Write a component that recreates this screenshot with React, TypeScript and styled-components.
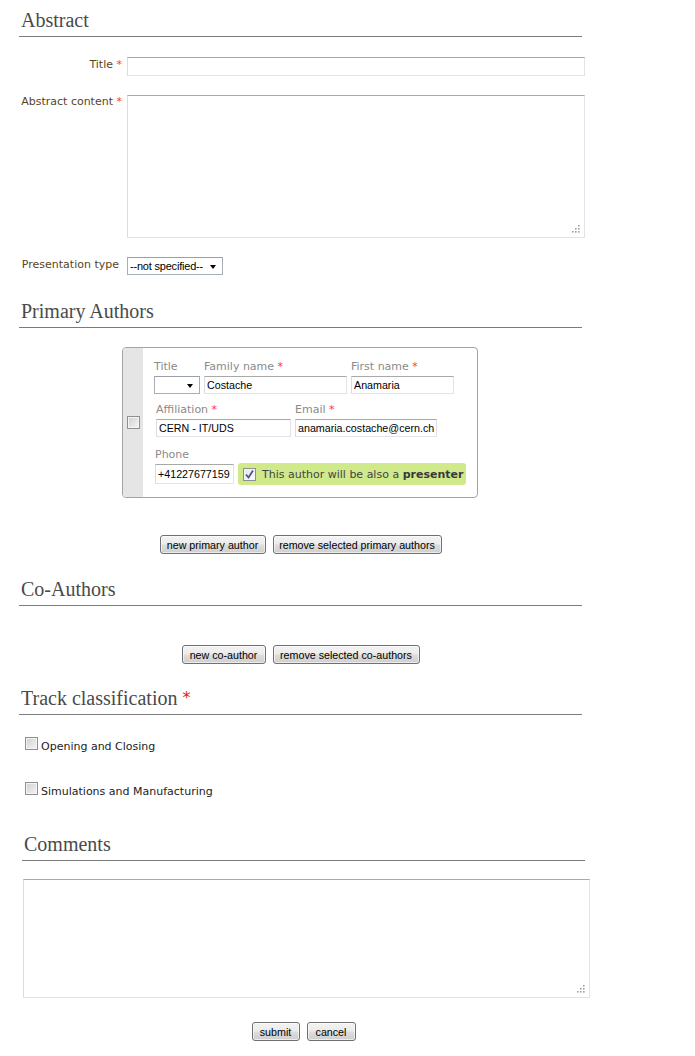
import React from "react";
import styled, { createGlobalStyle } from "styled-components";

const Global = createGlobalStyle`
  html, body { margin: 0; padding: 0; background: #ffffff; }
  body { font-family: "DejaVu Sans", Verdana, sans-serif; }
  * { box-sizing: border-box; }
`;

const Page = styled.div`
  padding: 8px 0 20px 19px;
  width: 600px;
`;

const Section = styled.section<{ $top?: number; $indent?: number }>`
  margin-top: ${(p) => p.$top ?? 0}px;
  margin-left: ${(p) => p.$indent ?? 0}px;
`;

const Heading = styled.h2`
  margin: 0;
  width: 563px;
  padding: 0 0 4px 2px;
  font-family: "Liberation Serif", "Times New Roman", serif;
  font-weight: normal;
  font-size: 20px;
  line-height: 24px;
  color: #4a4a4a;
  border-bottom: 1px solid #7b7b7b;
`;

const Star = styled.span`
  color: #ff3333;
`;

const HeadStar = styled.span`
  color: #e0201a;
  font-family: "DejaVu Sans", sans-serif;
  font-size: 16px;
  vertical-align: 2px;
`;

const FormGrid = styled.div`
  margin-top: 20px;
  display: grid;
  grid-template-columns: 104px 458px;
  column-gap: 4px;
  row-gap: 19px;
  align-items: start;
`;

const FieldLabel = styled.label<{ $pad?: number; $shift?: number }>`
  text-align: right;
  font-size: 11px;
  line-height: 13px;
  padding-top: ${(p) => p.$pad ?? 0}px;
  padding-right: ${(p) => 1 + (p.$shift ?? 0)}px;
  color: #5a4422;
  white-space: nowrap;
`;

const TextInput = styled.input<{ $w?: number; $h?: number }>`
  display: block;
  width: ${(p) => (p.$w ? `${p.$w}px` : "100%")};
  height: ${(p) => p.$h ?? 18}px;
  margin: 0;
  padding: 0 1px 0 2px;
  font-family: "Liberation Sans", Arial, sans-serif;
  font-size: 10.7px;
  color: #000;
  background: #fff;
  border: 1px solid #e2e3ea;
  border-top-color: #a9a9a9;
  border-left-color: #dadce3;
  outline: none;
`;

const AreaWrap = styled.div<{ $w?: number; $h: number; $mt?: number; $ml?: number }>`
  position: relative;
  width: ${(p) => (p.$w ? `${p.$w}px` : "100%")};
  height: ${(p) => p.$h}px;
  margin-top: ${(p) => p.$mt ?? 0}px;
  margin-left: ${(p) => p.$ml ?? 0}px;
`;

const Area = styled.textarea`
  display: block;
  width: 100%;
  height: 100%;
  margin: 0;
  resize: none;
  border: 1px solid #e2e3ea;
  border-top-color: #a9a9a9;
  border-left-color: #dadce3;
  outline: none;
  font-family: "Liberation Sans", Arial, sans-serif;
  font-size: 11px;
`;

const Grip = styled.svg`
  position: absolute;
  right: 5px;
  bottom: 5px;
  width: 8px;
  height: 8px;
  pointer-events: none;
`;

const SelectBox = styled.span<{ $w: number; $h?: number }>`
  display: flex;
  align-items: center;
  justify-content: space-between;
  width: ${(p) => p.$w}px;
  height: ${(p) => p.$h ?? 18}px;
  padding: 0 6px 0 2px;
  background: #fff;
  border: 1px solid #a8aeb6;
  border-top-color: #9aa0a8;
  font-family: "Liberation Sans", Arial, sans-serif;
  font-size: 11px;
  color: #000;
  letter-spacing: -0.2px;
`;

const Arrow = styled.span`
  width: 0;
  height: 0;
  margin-top: 2px;
  border-left: 3.5px solid transparent;
  border-right: 3.5px solid transparent;
  border-top: 4px solid #000;
`;

/* checkbox */
const Box = styled.span<{ $checked?: boolean }>`
  display: inline-flex;
  align-items: center;
  justify-content: center;
  flex: none;
  width: 13px;
  height: 13px;
  border: 1px solid #8e8f8f;
  box-shadow: inset 0 0 0 1px #f4f4f4;
  background: ${(p) =>
    p.$checked
      ? "linear-gradient(135deg, #e6e6e6 0%, #fbfbfb 100%)"
      : "linear-gradient(135deg, #cfcfcf 0%, #f6f6f6 100%)"};
`;

const Check = ({ checked }: { checked?: boolean }) => (
  <Box $checked={checked}>
    {checked && (
      <svg width="11" height="11" viewBox="0 0 11 11">
        <path d="M2 5.5 L4.5 8.5 L9 1.5" fill="none" stroke="#4a5890" strokeWidth="1.8" />
      </svg>
    )}
  </Box>
);

/* author card */
const Card = styled.div`
  display: flex;
  width: 356px;
  height: 151px;
  margin: 19px 0 0 103px;
  border: 1px solid #a3a3a3;
  border-radius: 4px;
  overflow: hidden;
`;

const CardSide = styled.div`
  flex: none;
  width: 20px;
  display: flex;
  align-items: center;
  justify-content: center;
  background: #e5e5e5;
`;

const CardBody = styled.div`
  flex: 1;
  padding: 12px 0 12px 0;
  display: flex;
  flex-direction: column;
`;

const CardRow = styled.div<{ $left: number; $top?: number; $end?: boolean }>`
  display: flex;
  gap: 4px;
  padding-left: ${(p) => p.$left}px;
  margin-top: ${(p) => p.$top ?? 0}px;
  align-items: ${(p) => (p.$end ? "flex-end" : "flex-start")};
`;

const Field = styled.div`
  display: flex;
  flex-direction: column;
  gap: 3px;
`;

const CardLabel = styled.span`
  font-size: 11px;
  line-height: 13px;
  color: #8a8a8a;
  white-space: nowrap;
`;

const Presenter = styled.div`
  display: flex;
  align-items: center;
  gap: 6px;
  width: 228px;
  height: 22px;
  margin-bottom: -1px;
  padding: 1px 0 0 5px;
  background: #cfe98b;
  border-radius: 3px;
  font-size: 11px;
  color: #444;
  white-space: nowrap;
  b {
    font-weight: bold;
    color: #3a3a3a;
  }
`;

/* buttons */
const ButtonRow = styled.div<{ $top: number }>`
  display: flex;
  justify-content: center;
  gap: 7px;
  width: 563px;
  margin-top: ${(p) => p.$top}px;
`;

const Btn = styled.button<{ $w: number }>`
  width: ${(p) => p.$w}px;
  height: 19px;
  margin: 0;
  padding: 0;
  font-family: "Liberation Sans", Arial, sans-serif;
  font-size: 10.7px;
  color: #000;
  border: 1px solid #707070;
  border-radius: 3px;
  background: linear-gradient(#f3f3f3 0%, #ebebeb 48%, #dddddd 52%, #cfcfcf 100%);
  box-shadow: inset 0 0 0 1px rgba(255, 255, 255, 0.6);
  cursor: pointer;
`;

/* track list */
const TrackList = styled.div`
  margin-top: 22px;
  padding-left: 6px;
  display: flex;
  flex-direction: column;
  gap: 28px;
`;

const TrackItem = styled.label`
  display: flex;
  align-items: flex-start;
  gap: 3px;
  height: 17px;
  font-size: 11px;
  line-height: 13px;
  color: #222;
`;

const TrackText = styled.span`
  padding-top: 3px;
`;

const GripDots = () => (
  <Grip viewBox="0 0 8 8">
    {[
      [6, 0],
      [3, 3],
      [6, 3],
      [0, 6],
      [3, 6],
      [6, 6],
    ].map(([x, y], i) => (
      <rect key={i} x={x} y={y} width="1.6" height="1.6" fill="#a0a0a0" />
    ))}
  </Grip>
);

export default function App() {
  return (
    <>
      <Global />
      <Page>
        <Section>
          <Heading>Abstract</Heading>
          <FormGrid>
            <FieldLabel $pad={1}>
              Title <Star>*</Star>
            </FieldLabel>
            <TextInput $h={19} />
            <FieldLabel $pad={0}>
              Abstract content <Star>*</Star>
            </FieldLabel>
            <AreaWrap $h={143}>
              <Area />
              <GripDots />
            </AreaWrap>
            <FieldLabel $pad={1} $shift={3}>
              Presentation type
            </FieldLabel>
            <SelectBox $w={96}>
              <span>--not specified--</span>
              <Arrow />
            </SelectBox>
          </FormGrid>
        </Section>

        <Section $top={24}>
          <Heading>Primary Authors</Heading>
          <Card>
            <CardSide>
              <Check />
            </CardSide>
            <CardBody>
              <CardRow $left={11}>
                <Field>
                  <CardLabel>Title</CardLabel>
                  <SelectBox $w={46}>
                    <span />
                    <Arrow />
                  </SelectBox>
                </Field>
                <Field>
                  <CardLabel>
                    Family name <Star>*</Star>
                  </CardLabel>
                  <TextInput $w={143} defaultValue="Costache" />
                </Field>
                <Field>
                  <CardLabel>
                    First name <Star>*</Star>
                  </CardLabel>
                  <TextInput $w={103} defaultValue="Anamaria" />
                </Field>
              </CardRow>
              <CardRow $left={13} $top={9}>
                <Field>
                  <CardLabel>
                    Affiliation <Star>*</Star>
                  </CardLabel>
                  <TextInput $w={135} defaultValue="CERN - IT/UDS" />
                </Field>
                <Field>
                  <CardLabel>
                    Email <Star>*</Star>
                  </CardLabel>
                  <TextInput $w={142} defaultValue="anamaria.costache@cern.ch" />
                </Field>
              </CardRow>
              <CardRow $left={12} $top={11} $end>
                <Field>
                  <CardLabel>Phone</CardLabel>
                  <TextInput $w={79} $h={20} defaultValue="+41227677159" />
                </Field>
                <Presenter>
                  <Check checked />
                  <span>
                    This author will be also a <b>presenter</b>
                  </span>
                </Presenter>
              </CardRow>
            </CardBody>
          </Card>
          <ButtonRow $top={37}>
            <Btn $w={106}>new primary author</Btn>
            <Btn $w={169}>remove selected primary authors</Btn>
          </ButtonRow>
        </Section>

        <Section $top={23}>
          <Heading>Co-Authors</Heading>
          <ButtonRow $top={39}>
            <Btn $w={84}>new co-author</Btn>
            <Btn $w={147}>remove selected co-authors</Btn>
          </ButtonRow>
        </Section>

        <Section $top={22}>
          <Heading>
            Track classification <HeadStar>*</HeadStar>
          </Heading>
          <TrackList>
            <TrackItem>
              <Check />
              <TrackText>Opening and Closing</TrackText>
            </TrackItem>
            <TrackItem>
              <Check />
              <TrackText>Simulations and Manufacturing</TrackText>
            </TrackItem>
          </TrackList>
        </Section>

        <Section $top={33} $indent={3}>
          <Heading>Comments</Heading>
          <AreaWrap $w={567} $h={119} $mt={18} $ml={1}>
            <Area />
            <GripDots />
          </AreaWrap>
          <ButtonRow $top={24}>
            <Btn $w={48}>submit</Btn>
            <Btn $w={49}>cancel</Btn>
          </ButtonRow>
        </Section>
      </Page>
    </>
  );
}
